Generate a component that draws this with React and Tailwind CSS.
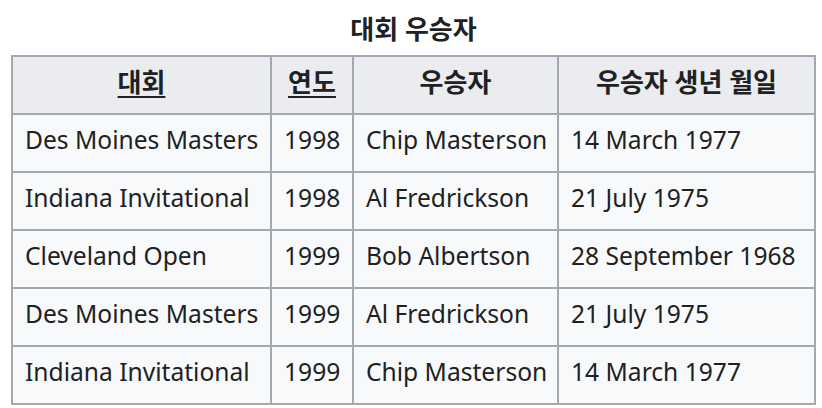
const rows = [
  ['Des Moines Masters', '1998', 'Chip Masterson', '14 March 1977'],
  ['Indiana Invitational', '1998', 'Al Fredrickson', '21 July 1975'],
  ['Cleveland Open', '1999', 'Bob Albertson', '28 September 1968'],
  ['Des Moines Masters', '1999', 'Al Fredrickson', '21 July 1975'],
  ['Indiana Invitational', '1999', 'Chip Masterson', '14 March 1977'],
];

export default function App() {
  return (
    <div className="w-[822px] h-[408px] bg-white pl-[11px] pt-[10px] text-[#202122] font-['Noto_Sans','Noto_Sans_CJK_KR',sans-serif]">
      <table className="border-collapse table-fixed w-[803px] text-[24.6px] leading-[1.5]">
        <caption className="font-bold text-[26px] h-[45px] leading-[38px]">대회 우승자</caption>
        <thead>
          <tr className="h-[58px] bg-[#eaecf0] text-[26px]">
            <th className="w-[259px] border-2 border-[#a2a9b1] px-3 pb-[6px] font-bold"><span className="underline underline-offset-4">대회</span></th>
            <th className="w-[82px] border-2 border-[#a2a9b1] px-3 pb-[6px] font-bold"><span className="underline underline-offset-4">연도</span></th>
            <th className="w-[205px] border-2 border-[#a2a9b1] px-3 pb-[6px] font-bold">우승자</th>
            <th className="w-[257px] border-2 border-[#a2a9b1] px-3 pb-[6px] font-bold">우승자 생년 월일</th>
          </tr>
        </thead>
        <tbody>
          {rows.map((r, i) => (
            <tr key={i} className="h-[58px] bg-[#f8f9fa]">
              {r.map((c, j) => (
                <td key={j} className="border-2 border-[#a2a9b1] pl-3 pr-1 pb-[5px] whitespace-nowrap">{c}</td>
              ))}
            </tr>
          ))}
        </tbody>
      </table>
    </div>
  );
}
